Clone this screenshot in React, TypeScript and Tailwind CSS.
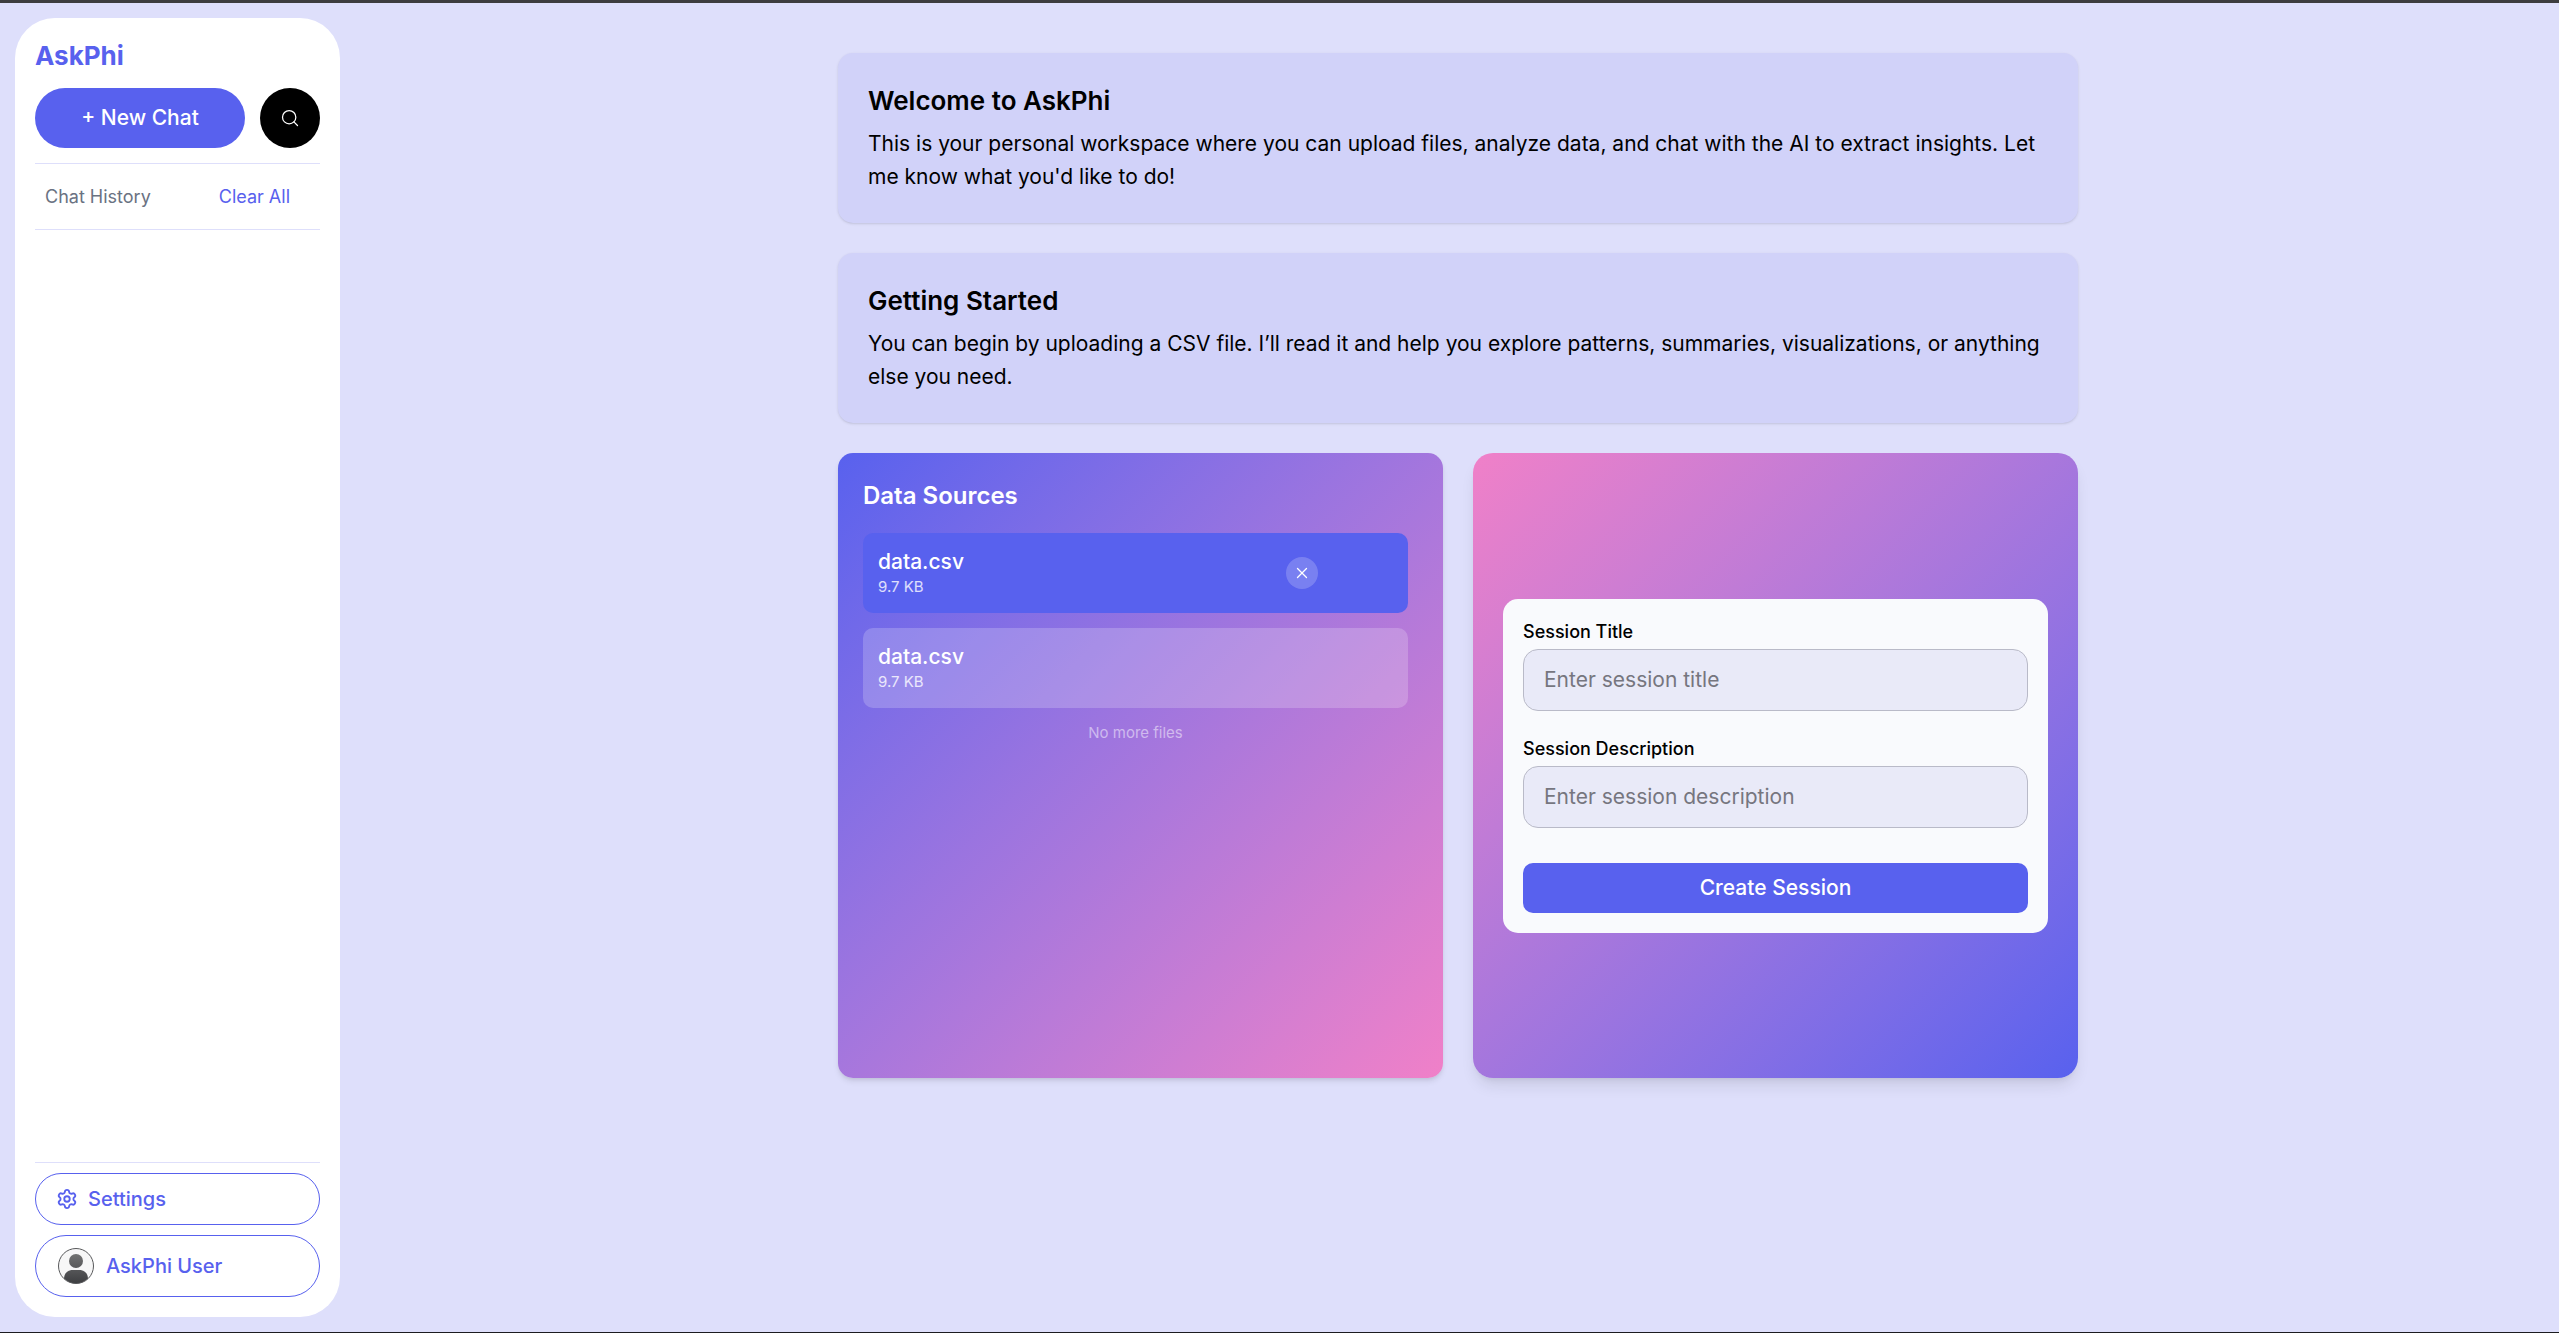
import { Search, Settings, X } from 'lucide-react';

const files = [
  { id: 1, name: 'data.csv', size: '9.7 KB', selected: true },
  { id: 2, name: 'data.csv', size: '9.7 KB', selected: false },
];

const messages = [
  {
    title: 'Welcome to AskPhi',
    body: "This is your personal workspace where you can upload files, analyze data, and chat with the AI to extract insights. Let me know what you'd like to do!",
  },
  {
    title: 'Getting Started',
    body: 'You can begin by uploading a CSV file. I’ll read it and help you explore patterns, summaries, visualizations, or anything else you need.',
  },
];

function Avatar() {
  return (
    <svg width="36" height="36" viewBox="0 0 36 36" aria-hidden="true">
      <defs>
        <linearGradient id="avatar-fill" x1="0" y1="0" x2="0" y2="36" gradientUnits="userSpaceOnUse">
          <stop offset="0" stopColor="#7c7c7c" />
          <stop offset="1" stopColor="#3c3d40" />
        </linearGradient>
        <clipPath id="avatar-clip">
          <circle cx="18" cy="18" r="17.5" />
        </clipPath>
      </defs>
      <circle cx="18" cy="18" r="17.5" fill="#f7f7f7" />
      <g clipPath="url(#avatar-clip)" fill="url(#avatar-fill)">
        <circle cx="18" cy="13" r="7" />
        <path d="M6 36V31C6 25 10 22 15 22H21C26 22 30 25 30 31V36Z" />
      </g>
      <circle cx="18" cy="18" r="17.5" fill="none" stroke="#58595b" />
    </svg>
  );
}

function Sidebar() {
  return (
    <aside className="my-[15px] mr-[17px] ml-[15px] flex w-[325px] shrink-0 flex-col rounded-[40px] bg-white p-5">
      <h1 className="mb-[15px] text-[26px] leading-[35px] font-bold text-[#5861ee]">AskPhi</h1>
      <div className="flex gap-[15px] border-b border-[#dedffb] pb-[15px]">
        <button className="h-[60px] flex-1 rounded-full bg-[#5861ee] text-[21px] font-medium text-white">+ New Chat</button>
        <button aria-label="Search" className="flex size-[60px] items-center justify-center rounded-full bg-black text-white">
          <Search size={20} strokeWidth={1.5} />
        </button>
      </div>
      <div className="flex h-[66px] items-center justify-between border-b border-[#dedffb] pr-[30px] pl-[10px] text-lg">
        <span className="text-gray-500">Chat History</span>
        <button className="text-[#5861ee]">Clear All</button>
      </div>

      <div className="mt-auto flex flex-col gap-[10px] border-t border-[#dedffb] pt-[10px] text-xl font-medium text-[#5861ee]">
        <button className="flex h-[52px] items-center gap-[10px] rounded-full border border-[#5861ee] px-5">
          <Settings size={22} strokeWidth={2} />
          Settings
        </button>
        <button className="flex h-[62px] items-center gap-3 rounded-full border border-[#5861ee] px-[22px]">
          <Avatar />
          AskPhi User
        </button>
      </div>
    </aside>
  );
}

function DataSources() {
  return (
    <section className="flex flex-col rounded-[15px] bg-linear-135 from-[#5861ee] to-[#f080c8] py-[25px] pr-[35px] pl-[25px] text-white shadow-md">
      <h2 className="mb-5 text-2xl leading-[35px] font-semibold">Data Sources</h2>
      <ul className="space-y-[15px]">
        {files.map((file) => (
          <li
            key={file.id}
            className={`flex h-20 items-center justify-between rounded-[10px] px-[15px] ${file.selected ? 'bg-[#5861ee]' : 'bg-white/20'}`}
          >
            <div>
              <p className="text-[21px] leading-7 font-medium">{file.name}</p>
              <p className="text-[15px] leading-[22px] text-white/80">{file.size}</p>
            </div>
            {file.selected && (
              <button aria-label="Remove file" className="mr-[75px] flex size-8 items-center justify-center rounded-full bg-white/20">
                <X size={18} strokeWidth={1.75} />
              </button>
            )}
          </li>
        ))}
      </ul>
      <p className="mt-[14px] text-center text-[15px] leading-[22px] text-white/50">No more files</p>
    </section>
  );
}

function SessionForm() {
  return (
    <section className="flex items-center rounded-[20px] bg-linear-135 from-[#f080c8] to-[#5861ee] px-[30px] shadow-lg">
      <form className="flex w-full flex-col rounded-[15px] bg-[#f9fafd] p-5">
        <label htmlFor="session-title" className="mb-[5px] text-lg leading-[25px] font-medium">
          Session Title
        </label>
        <input
          id="session-title"
          type="text"
          placeholder="Enter session title"
          className="h-[62px] rounded-[15px] border border-[#b9bac8] bg-[#e9eaf8] px-5 text-[21px] placeholder:text-[#76767f]"
        />
        <label htmlFor="session-description" className="mt-[25px] mb-[5px] text-lg leading-[25px] font-medium">
          Session Description
        </label>
        <input
          id="session-description"
          type="text"
          placeholder="Enter session description"
          className="h-[62px] rounded-[15px] border border-[#b9bac8] bg-[#e9eaf8] px-5 text-[21px] placeholder:text-[#76767f]"
        />
        <button type="button" className="mt-[35px] h-[50px] rounded-[10px] bg-[#5861ee] text-[21px] font-medium text-white">
          Create Session
        </button>
      </form>
    </section>
  );
}

export default function App() {
  return (
    <div className="flex h-screen border-t-[3px] border-b border-t-[#3d3d3f] border-b-[#1c1c20] bg-[#dedffb] font-[Inter,'Open_Sans',sans-serif] text-black">
      <Sidebar />
      <main className="flex-1 overflow-auto pt-[50px]">
        <div className="mx-auto flex max-w-[1240px] flex-col gap-[30px]">
          {messages.map((message) => (
            <article key={message.title} className="rounded-[15px] bg-[#d1d2f9] p-[30px] shadow-sm">
              <h2 className="mb-2 text-[26px] leading-9 font-semibold">{message.title}</h2>
              <p className="text-[21px] leading-[33px]">{message.body}</p>
            </article>
          ))}
          <div className="grid min-h-[625px] grid-cols-2 gap-[30px]">
            <DataSources />
            <SessionForm />
          </div>
        </div>
      </main>
    </div>
  );
}
